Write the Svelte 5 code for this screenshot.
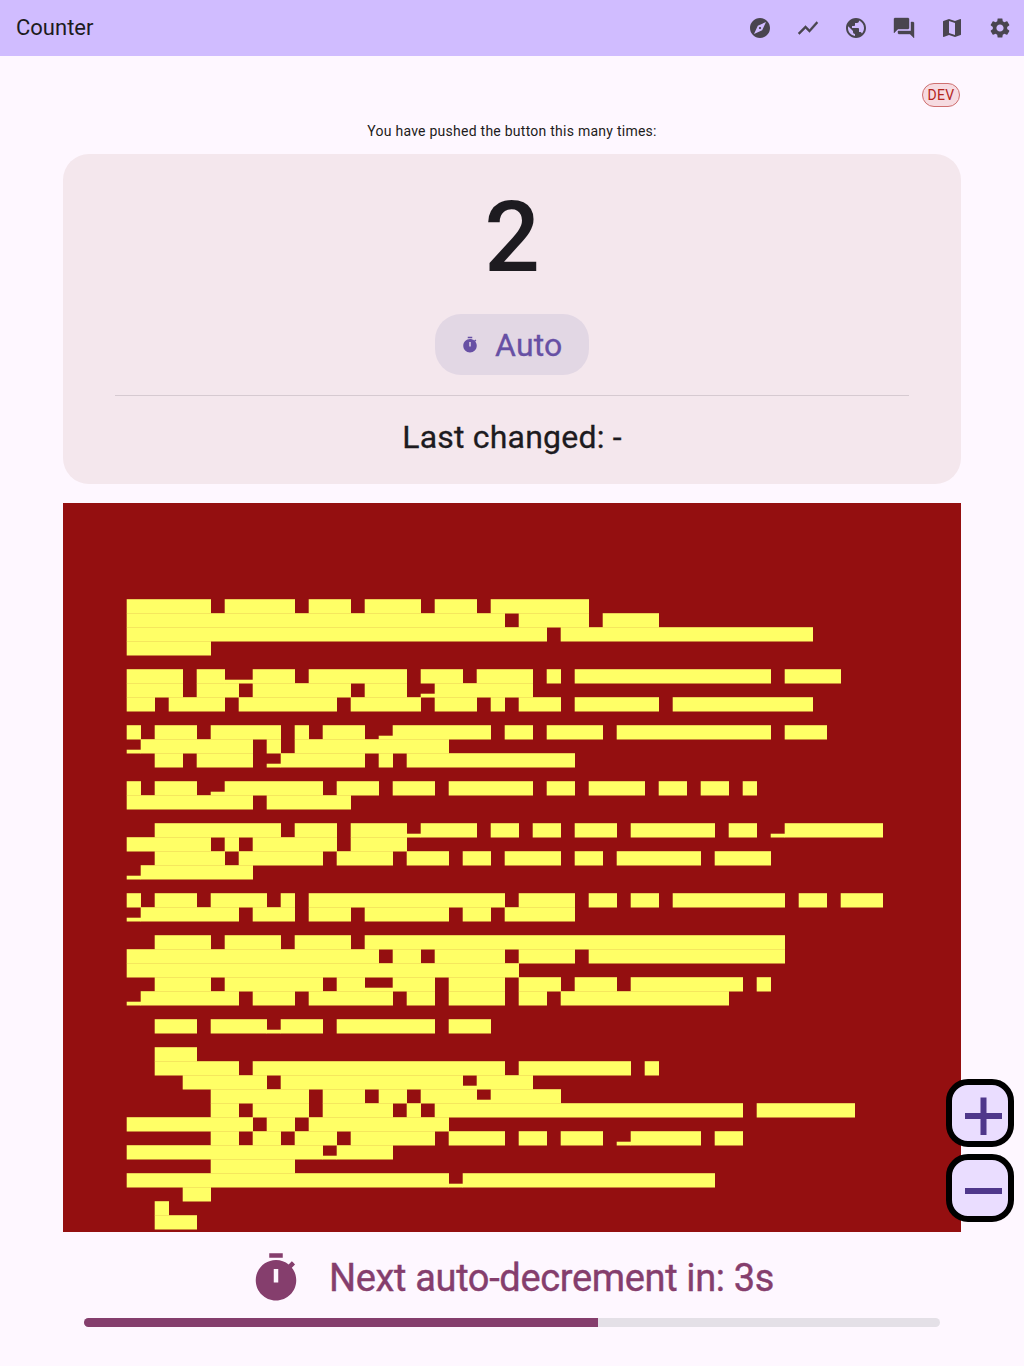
<script>
  const timer =
    'M15 1H9v2h6V1zm-4 13h2V8h-2v6zm8.03-6.61 1.42-1.42c-.43-.51-.9-.99-1.41-1.41l-1.42 1.42C16.07 4.74 14.12 4 12 4c-4.97 0-9 4.03-9 9s4.02 9 9 9 9-4.03 9-9c0-2.12-.74-4.07-1.97-5.61z';

  const actions = [
    { name: 'Explore', d: 'M12 10.9c-.61 0-1.1.49-1.1 1.1s.49 1.1 1.1 1.1c.61 0 1.1-.49 1.1-1.1s-.49-1.1-1.1-1.1zM12 2C6.48 2 2 6.48 2 12s4.48 10 10 10 10-4.48 10-10S17.52 2 12 2zm2.19 12.19L6 18l3.81-8.19L18 6l-3.81 8.19z' },
    { name: 'Chart', d: 'M3.5 18.49l6-6.01 4 4L22 6.92l-1.41-1.41-7.09 7.97-4-4L2 16.99z', bold: true },
    { name: 'Public', d: 'M12 2C6.48 2 2 6.48 2 12s4.48 10 10 10 10-4.48 10-10S17.52 2 12 2zm-1 17.93c-3.95-.49-7-3.85-7-7.93 0-.62.08-1.21.21-1.79L9 15v1c0 1.1.9 2 2 2v1.93zm6.9-2.54c-.26-.81-1-1.39-1.9-1.39h-1v-3c0-.55-.45-1-1-1H8v-2h2c.55 0 1-.45 1-1V7h2c1.1 0 2-.9 2-2v-.41c2.93 1.19 5 4.06 5 7.41 0 2.08-.8 3.97-2.1 5.39z' },
    { name: 'Chat', d: 'M21 6h-2v9H6v2c0 .55.45 1 1 1h11l4 4V7c0-.55-.45-1-1-1zm-4 6V3c0-.55-.45-1-1-1H3c-.55 0-1 .45-1 1v14l4-4h10c.55 0 1-.45 1-1z', bold: true },
    { name: 'Map', d: 'M20.5 3l-.16.03L15 5.1 9 3 3.36 4.9c-.21.07-.36.25-.36.48V20.500c0 .28.22.5.5.5l.16-.03L9 18.9l6 2.1 5.64-1.9c.21-.07.36-.25.36-.48V3.500c0-.28-.22-.5-.5-.5zM15 19l-6-2.110V5l6 2.110V19z' },
    { name: 'Settings', d: 'M19.14 12.94c.04-.3.06-.61.06-.94 0-.32-.02-.64-.07-.94l2.030-1.580c.18-.14.23-.41.12-.61l-1.920-3.320c-.12-.22-.37-.29-.59-.22l-2.390.96c-.5-.38-1.030-.7-1.620-.94l-.36-2.540c-.04-.24-.24-.41-.48-.41h-3.840c-.24 0-.43.17-.47.41l-.36 2.540c-.59.24-1.130.57-1.620.94l-2.390-.96c-.22-.08-.47 0-.59.22L2.740 8.870c-.12.21-.08.47.12.61l2.030 1.580c-.05.3-.09.63-.09.94s.02.64.07.94l-2.030 1.580c-.18.14-.23.41-.12.61l1.920 3.320c.12.22.37.29.59.22l2.390-.96c.5.38 1.030.7 1.620.94l.36 2.540c.05.24.24.41.48.41h3.840c.24 0 .44-.17.47-.41l.36-2.540c.59-.24 1.130-.56 1.620-.94l2.390.96c.22.08.47 0 .59-.22l1.920-3.320c.12-.22.07-.47-.12-.61l-2.010-1.580zM12 15.600c-1.980 0-3.600-1.620-3.600-3.600s1.620-3.600 3.600-3.600 3.600 1.620 3.600 3.600-1.620 3.600-3.600 3.600z' }
  ];

  // One string per line of block glyphs: "start-end" column runs,
  // a leading underscore marks a run that only fills the cell's foot.
  const lines = [
    '0-6 7-12 13-16 17-21 22-25 26-33',
    '0-27 28-33 34-38',
    '0-30 31-49',
    '0-6',
    '',
    '0-4 5-7 _7-9 9-12 13-20 21-24 25-29 30-31 32-46 47-51',
    '0-4 5-8 9-16 17-20 _21-22 22-29',
    '0-2 3-7 8-15 16-21 22-25 26-27 28-31 32-38 39-49',
    '',
    '0-1 2-5 6-11 12-13 14-17 _18-19 19-26 27-29 30-34 35-46 47-50',
    '_0-1 1-9 10-11 12-23',
    '2-4 5-9 _10-11 11-17 18-19 20-32',
    '',
    '0-1 2-5 _6-7 7-14 15-18 19-22 23-29 30-32 33-37 38-40 41-43 44-45',
    '0-9 10-16',
    '',
    '2-11 12-15 16-20 _20-21 21-25 26-28 29-31 32-35 36-42 43-45 _46-47 47-54',
    '0-6 7-8 9-15 16-20',
    '2-7 8-14 15-19 20-23 24-26 27-31 32-34 35-41 42-46',
    '_0-1 1-9',
    '',
    '0-1 2-5 6-10 11-12 13-27 28-32 33-35 36-38 39-47 48-50 51-54',
    '_0-1 1-8 9-12 13-16 17-23 24-26 27-32',
    '',
    '2-6 7-11 12-16 17-47',
    '0-18 19-21 22-27 28-32 33-47',
    '0-28',
    '2-6 7-14 15-17 _17-19 19-22 23-27 28-31 32-35 36-44 45-46',
    '_0-1 1-8 9-12 13-19 20-22 23-27 28-30 31-43',
    '',
    '2-5 6-10 _10-11 11-14 15-22 23-26',
    '',
    '2-5',
    '2-8 9-27 28-36 37-38',
    '4-10 11-24 _24-25 25-29',
    '6-13 14-17 18-20 21-25 _25-26 26-31',
    '6-8 9-13 14-19 20-21 22-44 45-52',
    '0-9 10-12 13-23',
    '6-8 9-11 12-15 16-22 23-27 28-30 31-34 _35-36 36-41 42-44',
    '0-14 _14-15 15-19',
    '6-12',
    '0-23 _23-24 24-42',
    '4-6',
    '2-3',
    '2-5'
  ];

  const CELL = 14;
  const OVERLAP = 0.3;
  const blocks = lines.flatMap((line, row) =>
    line
      .split(' ')
      .filter(Boolean)
      .map((run) => {
        const low = run.startsWith('_');
        const [a, b] = run.replace('_', '').split('-').map(Number);
        return {
          x: a * CELL,
          y: row * CELL + (low ? 10.5 : 0),
          w: (b - a) * CELL + OVERLAP,
          h: (low ? 3.5 : CELL) + OVERLAP
        };
      })
  );

  const progress = 60;
</script>

<div class="screen">
  <header>
    <h1>Counter</h1>
    <nav>
      {#each actions as a}
        <button aria-label={a.name}><svg viewBox="0 0 24 24" class:bold={a.bold}><path d={a.d} /></svg></button>
      {/each}
    </nav>
  </header>

  <main>
    <div class="env"><span class="badge">DEV</span></div>
    <p class="caption">You have pushed the button this many times:</p>

    <section class="card">
      <div class="count">2</div>
      <div class="chip">
        <svg viewBox="0 0 24 24"><path fill-rule="evenodd" d={timer} /></svg>
        <span>Auto</span>
      </div>
      <hr />
      <p class="changed">Last changed: -</p>
    </section>

    <section class="error">
      <svg viewBox="0 0 800 640">
        <g transform="translate(.7 .2)">
          {#each blocks as b}
            <rect x={b.x} y={b.y} width={b.w} height={b.h} />
          {/each}
        </g>
      </svg>
    </section>

    <div class="next">
      <svg viewBox="0 0 24 24"><path fill-rule="evenodd" d={timer} /></svg>
      <span>Next auto-decrement in: 3s</span>
    </div>
    <div class="track"><div class="fill" style="width: {progress}%"></div></div>
  </main>

  <div class="fabs">
    <button aria-label="Increment"><svg viewBox="0 0 56 56"><path d="M13 28h37v6H13zM28.500 12.500h6v37.500h-6z" /></svg></button>
    <button aria-label="Decrement"><svg viewBox="0 0 56 56"><path d="M13 28h37v6H13z" /></svg></button>
  </div>
</div>

<style>
  :global(body) { background: #fef7ff; }
  .screen {
    position: relative;
    width: 1024px;
    height: 1366px;
    overflow: hidden;
    background: #fef7ff;
    color: #1d1b20;
    font-family: Roboto, 'Liberation Sans', sans-serif;
  }
  h1, p { margin: 0; font-weight: 400; }
  button { padding: 0; border: 0; background: none; }
  svg { display: block; fill: currentColor; }
  header {
    display: flex;
    align-items: center;
    justify-content: space-between;
    height: 56px;
    padding-left: 16px;
    background: #d0bcff;
  }
  h1 { font-size: 22px; line-height: 28px; }
  nav { display: flex; color: #49454f; }
  nav button { display: grid; place-items: center; width: 48px; height: 48px; color: inherit; }
  nav svg { width: 24px; height: 24px; }
  .bold { stroke: currentColor; stroke-width: .4; }
  main { display: flex; flex-direction: column; padding: 27px 63px 0; }
  .env { display: flex; justify-content: flex-end; padding-right: 1px; }
  .badge {
    box-sizing: border-box;
    width: 38px;
    height: 24px;
    border: 1px solid #cf6f70;
    border-radius: 12px;
    background: #f6dbe1;
    color: #b3261e;
    font-size: 14px;
    line-height: 23px;
    letter-spacing: .25px;
    text-align: center;
  }
  .caption {
    height: 20px;
    margin: 14px 0 13px;
    font-size: 14px;
    line-height: 20px;
    letter-spacing: .25px;
    text-align: center;
  }
  .card {
    display: flex;
    flex-direction: column;
    align-items: center;
    height: 330px;
    border-radius: 26px;
    background: #f4e7ed;
  }
  .count { height: 117px; margin-top: 25px; font-size: 98px; line-height: 117px; font-weight: 500; }
  .chip {
    box-sizing: border-box;
    display: flex;
    align-items: center;
    gap: 16px;
    width: 154px;
    height: 61px;
    margin-top: 18px;
    padding-left: 26px;
    border-radius: 26px;
    background: #e2d7e4;
    color: #6750a4;
    font-size: 32px;
    letter-spacing: .2px;
    -webkit-text-stroke: .3px currentColor;
  }
  .chip svg { width: 18px; height: 18px; }
  hr { width: 794px; height: 1px; margin: 20px 0 0; border: 0; background: #d6cad1; }
  .changed {
    height: 40px;
    margin-top: 21px;
    font-size: 32px;
    line-height: 40px;
    letter-spacing: .2px;
    -webkit-text-stroke: .3px currentColor;
  }
  .error {
    box-sizing: border-box;
    height: 729px;
    margin-top: 19px;
    padding: 96px 0 0 63px;
    background: #940f10;
    color: #ffff66;
  }
  .error svg { width: 800px; height: 640px; }
  .next {
    display: flex;
    align-items: center;
    height: 54px;
    margin-top: 19px;
    padding-left: 186px;
    gap: 26px;
    color: #853e6d;
    font-size: 38px;
    letter-spacing: -.35px;
    white-space: nowrap;
    -webkit-text-stroke: .4px currentColor;
  }
  .next svg { width: 54px; height: 54px; }
  .track {
    height: 9px;
    margin: 13px 21px 0;
    border-radius: 4.5px;
    overflow: hidden;
    background: #e4e0e7;
  }
  .fill { height: 100%; background: #853e6d; }
  /* Floating buttons sit over the page content. */
  .fabs {
    position: absolute;
    top: 1079px;
    right: 10px;
    display: flex;
    flex-direction: column;
    gap: 7px;
  }
  .fabs button {
    box-sizing: border-box;
    width: 68px;
    height: 68px;
    border: 6px solid #000;
    border-radius: 22px;
    background: #eaddff;
    color: #4f378b;
  }
  .fabs svg { width: 56px; height: 56px; }
</style>
